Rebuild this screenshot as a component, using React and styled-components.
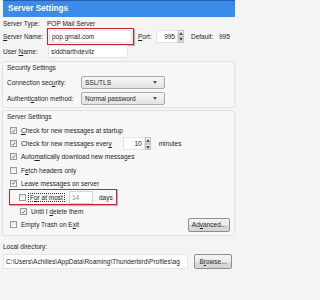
import React from "react";
import styled, { createGlobalStyle } from "styled-components";

const GlobalStyle = createGlobalStyle`
    html, body {
        margin: 0;
        padding: 0;
        background: #f4f4f4;
    }
    body {
        font-family: "Liberation Sans", Arial, sans-serif;
        font-size: 6.5px;
        color: #1e1e1e;
    }
`;

const Check = () => (
    <svg width="6" height="6" viewBox="0 0 6 6">
        <path d="M1 3.2 L2.4 4.6 L5 1.2" fill="none" stroke="#3a5fa8" strokeWidth="1" />
    </svg>
);

const Arrow = ({ up }) => (
    <svg width="4" height="3" viewBox="0 0 4 3">
        <path d={up ? "M0 3 L2 0 L4 3 Z" : "M0 0 L4 0 L2 3 Z"} fill="#555" />
    </svg>
);

const App = () => {
    return (
        <>
            <GlobalStyle />
            <Page>
                <Header>Server Settings</Header>

                <FieldRow $h={12}>
                    <Label>Server Type:</Label>
                    <Value>POP Mail Server</Value>
                </FieldRow>

                <FieldRow $h={15}>
                    <Label>
                        <u>S</u>erver Name:
                    </Label>
                    <Highlight>
                        <TextBox $w={83}>pop.gmail.com</TextBox>
                    </Highlight>
                    <Label $w={18} $ml={4}>
                        <u>P</u>ort:
                    </Label>
                    <Spin $w={22} value="995" />
                    <Label $w={28} $ml={7}>Default:</Label>
                    <Value>995</Value>
                </FieldRow>

                <FieldRow $h={14}>
                    <Label>
                        User <u>N</u>ame:
                    </Label>
                    <TextBox $w={80} $ml={1}>siddharthdevilz</TextBox>
                </FieldRow>

                <Group $h={47} $mt={3}>
                    <Caption>Security Settings</Caption>
                    <SelectRow>
                        <GroupLabel>
                            Connection sec<u>u</u>rity:
                        </GroupLabel>
                        <Select>
                            SSL/TLS
                            <Arrow />
                        </Select>
                    </SelectRow>
                    <SelectRow>
                        <GroupLabel>
                            Authenti<u>c</u>ation method:
                        </GroupLabel>
                        <Select>
                            Normal password
                            <Arrow />
                        </Select>
                    </SelectRow>
                </Group>

                <Group $h={126} $mt={2}>
                    <Caption>Server Settings</Caption>
                    <CheckList>
                        <CheckRow>
                            <Box $on>
                                <Check />
                            </Box>
                            <span>
                                <u>C</u>heck for new messages at startup
                            </span>
                        </CheckRow>
                        <CheckRow>
                            <Box $on>
                                <Check />
                            </Box>
                            <span>
                                Check for new messages ever<u>y</u>
                            </span>
                            <Spin $w={22} $ml={7} value="10" />
                            <Unit>minutes</Unit>
                        </CheckRow>
                        <CheckRow>
                            <Box $on>
                                <Check />
                            </Box>
                            <span>
                                Auto<u>m</u>atically download new messages
                            </span>
                        </CheckRow>
                        <CheckRow>
                            <Box />
                            <span>
                                F<u>e</u>tch headers only
                            </span>
                        </CheckRow>
                        <CheckRow>
                            <Box $on>
                                <Check />
                            </Box>
                            <span>Leave messages on server</span>
                        </CheckRow>
                        <CheckRow $tall>
                            <SubHighlight>
                                <Box />
                                <Focus>
                                    F<u>o</u>r at most
                                </Focus>
                                <TextBox $w={24} $ml={2} $muted>
                                    14
                                </TextBox>
                                <Unit>days</Unit>
                            </SubHighlight>
                        </CheckRow>
                        <CheckRow $indent>
                            <Box $on>
                                <Check />
                            </Box>
                            <span>
                                Until I <u>d</u>elete them
                            </span>
                        </CheckRow>
                        <CheckRow>
                            <Box />
                            <span>
                                Empty Trash on E<u>x</u>it
                            </span>
                            <Button $w={42} $push>
                                Ad<u>v</u>anced...
                            </Button>
                        </CheckRow>
                    </CheckList>
                </Group>

                <DirLabel>Local directory:</DirLabel>
                <DirRow>
                    <TextBox $w={185} $h={15}>
                        C:\Users\Achilles\AppData\Roaming\Thunderbird\Profiles\ag
                    </TextBox>
                    <Button $w={38} $h={15}>
                        B<u>r</u>owse...
                    </Button>
                </DirRow>
            </Page>
        </>
    );
};

const Spin = ({ value, $w, $ml }) => (
    <SpinBox $ml={$ml}>
        <TextBox $w={$w} $align="right">
            {value}
        </TextBox>
        <SpinButtons>
            <SpinHalf>
                <Arrow up />
            </SpinHalf>
            <SpinHalf>
                <Arrow />
            </SpinHalf>
        </SpinButtons>
    </SpinBox>
);

export default App;

const Page = styled.div`
    width: 239px;
    height: 300px;
    box-sizing: border-box;
    padding: 0 4px 0 2px;
    display: flex;
    flex-direction: column;
    overflow: hidden;
`;

const Header = styled.div`
    height: 17px;
    margin-left: 1px;
    box-sizing: border-box;
    background: #3a8ceb;
    border-top: 1px solid #2a5fae;
    color: #fff;
    font-weight: bold;
    font-size: 8.2px;
    display: flex;
    align-items: center;
    padding-left: 5px;
    padding-bottom: 1px;
`;

const FieldRow = styled.div`
    height: ${(p) => p.$h}px;
    display: flex;
    align-items: center;
    padding-left: 1px;
`;

const Label = styled.span`
    width: ${(p) => p.$w || 44}px;
    margin-left: ${(p) => p.$ml || 0}px;
    flex-shrink: 0;
    white-space: nowrap;
`;

const Value = styled.span`
    white-space: nowrap;
`;

const Highlight = styled.div`
    border: 1.5px solid #c4262e;
    padding: 1px;
    display: flex;
    box-shadow: 1px 1px 1px rgba(0, 0, 0, 0.25);
`;

const TextBox = styled.div`
    width: ${(p) => p.$w}px;
    height: ${(p) => p.$h || 13}px;
    margin-left: ${(p) => p.$ml || 0}px;
    box-sizing: border-box;
    background: #fff;
    border: 1px solid ${(p) => (p.$muted ? "#d4d4d4" : "#e4e4e4")};
    color: ${(p) => (p.$muted ? "#8a8a8a" : "#1e1e1e")};
    display: flex;
    align-items: center;
    justify-content: ${(p) => (p.$align === "right" ? "flex-end" : "flex-start")};
    padding: 0 2px;
    white-space: nowrap;
    overflow: hidden;
    flex-shrink: 0;
`;

const SpinBox = styled.div`
    display: flex;
    margin-left: ${(p) => p.$ml || 0}px;
`;

const SpinButtons = styled.div`
    display: flex;
    flex-direction: column;
    width: 6px;
    height: 13px;
`;

const SpinHalf = styled.div`
    flex: 1;
    display: flex;
    align-items: center;
    justify-content: center;
    background: linear-gradient(#f6f6f6, #dedede);
    border: 1px solid #c2c2c2;
    box-sizing: border-box;
`;

const Group = styled.div`
    height: ${(p) => p.$h}px;
    margin-top: ${(p) => p.$mt}px;
    box-sizing: border-box;
    border: 1px solid #dce2e8;
    border-radius: 3px;
    background: #f7f7f7;
    display: flex;
    flex-direction: column;
    padding: 0 4px 0 4px;
`;

const Caption = styled.div`
    height: 9px;
    display: flex;
    align-items: center;
    padding-top: 1px;
    margin-bottom: 3px;
`;

const SelectRow = styled.div`
    height: 15.5px;
    display: flex;
    align-items: center;
`;

const GroupLabel = styled.span`
    width: 74px;
    white-space: nowrap;
    flex-shrink: 0;
`;

const Select = styled.div`
    width: 84px;
    height: 13px;
    box-sizing: border-box;
    border: 1px solid #a9a9a9;
    border-radius: 2px;
    background: linear-gradient(#f7f7f7, #e3e3e3);
    display: flex;
    align-items: center;
    justify-content: space-between;
    padding: 0 7px 0 3px;
`;

const CheckList = styled.div`
    display: flex;
    flex-direction: column;
    padding-left: 3px;
`;

const CheckRow = styled.div`
    height: ${(p) => (p.$tall ? 15 : 13.2)}px;
    display: flex;
    align-items: center;
    gap: 4px;
    padding-left: ${(p) => (p.$indent ? 10 : 0)}px;
    white-space: nowrap;
`;

const Box = styled.div`
    width: 7px;
    height: 7px;
    box-sizing: border-box;
    border: 1px solid #9a9a9a;
    background: linear-gradient(#e6e6e6, #fdfdfd);
    display: flex;
    align-items: center;
    justify-content: center;
    flex-shrink: 0;
`;

const Unit = styled.span`
    margin-left: 4px;
`;

const SubHighlight = styled.div`
    height: 16px;
    margin-left: -1px;
    box-sizing: border-box;
    border: 1.5px solid #c4262e;
    box-shadow: 1px 1px 1px rgba(0, 0, 0, 0.25);
    display: flex;
    align-items: center;
    padding: 0 3px 0 9px;
    gap: 2px;
`;

const Focus = styled.span`
    border: 1px dotted #333;
    padding: 0 1px;
`;

const Button = styled.div`
    width: ${(p) => p.$w}px;
    height: ${(p) => p.$h || 14}px;
    margin-left: ${(p) => (p.$push ? "auto" : "6px")};
    box-sizing: border-box;
    border: 1px solid #8e8f8f;
    border-radius: 2px;
    background: linear-gradient(#f4f4f4 0%, #ebebeb 50%, #dcdcdc 51%, #d4d4d4 100%);
    display: flex;
    align-items: center;
    justify-content: center;
    flex-shrink: 0;
`;

const DirLabel = styled.div`
    height: 10px;
    margin-top: 5px;
    display: flex;
    align-items: center;
    padding-left: 1px;
`;

const DirRow = styled.div`
    display: flex;
    align-items: center;
    margin-top: 3px;
    padding-left: 1px;
`;
